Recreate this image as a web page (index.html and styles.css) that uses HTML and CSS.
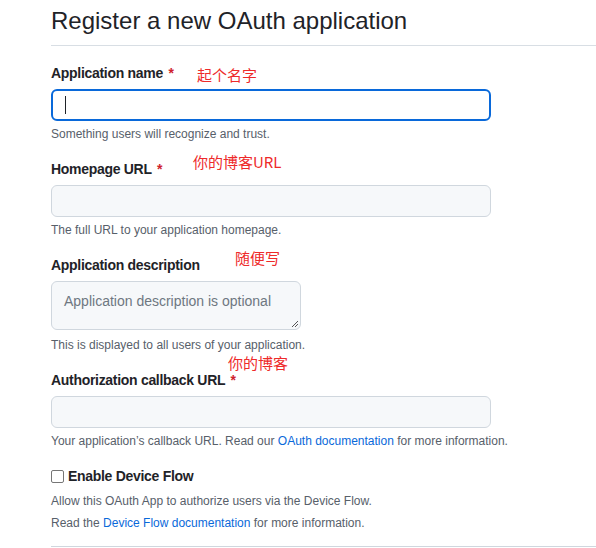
FILE: index.html
```html
<!DOCTYPE html>
<html lang="en">
<head>
<meta charset="utf-8">
<title>Register a new OAuth application</title>
<link rel="stylesheet" href="styles.css">
</head>
<body>
<div class="page">
  <h1 class="title">Register a new OAuth application</h1>
  <form class="form">
    <div class="group">
      <label class="label">Application name <span class="req">*</span></label>
      <span class="note note-1">起个名字</span>
      <div class="input focus"><span class="caret"></span></div>
      <p class="hint">Something users will recognize and trust.</p>
    </div>
    <div class="group">
      <label class="label">Homepage URL <span class="req">*</span></label>
      <span class="note note-2">你的博客URL</span>
      <div class="input"></div>
      <p class="hint">The full URL to your application homepage.</p>
    </div>
    <div class="group">
      <label class="label">Application description</label>
      <span class="note note-3">随便写</span>
      <div class="textarea"><span class="placeholder">Application description is optional</span><svg class="grip" width="10" height="10" viewBox="0 0 10 10"><path d="M9 3 L3 9 M9 6 L6 9" stroke="#555" stroke-width="1"/></svg></div>
      <p class="hint">This is displayed to all users of your application.</p>
    </div>
    <div class="group">
      <label class="label">Authorization callback URL <span class="req">*</span></label>
      <span class="note note-4">你的博客</span>
      <div class="input"></div>
      <p class="hint">Your application’s callback URL. Read our <a class="link">OAuth documentation</a> for more information.</p>
    </div>
    <div class="group">
      <label class="check-row"><span class="checkbox"></span>Enable Device Flow</label>
      <p class="hint tall">Allow this OAuth App to authorize users via the Device Flow.</p>
      <p class="hint tall">Read the <a class="link">Device Flow documentation</a> for more information.</p>
    </div>
  </form>
  <div class="rule"></div>
</div>
</body>
</html>
```

FILE: styles.css
```css
* { box-sizing: border-box; }
html, body { margin: 0; padding: 0; background: #fff; }
body {
  font-family: "Segoe UI", "Liberation Sans", "Noto Sans CJK SC", sans-serif;
  color: #1f2328;
}
.page {
  padding: 6px 0 0 51px;
  overflow: hidden;
  height: 548px;
}
.title {
  margin: 0;
  font-size: 24px;
  font-weight: 400;
  line-height: 30px;
  padding-bottom: 9px;
  border-bottom: 1px solid #d8dee4;
}
.form {
  display: flex;
  flex-direction: column;
  gap: 16px;
  padding-top: 17px;
}
.group {
  position: relative;
  display: flex;
  flex-direction: column;
  align-items: flex-start;
}
.label {
  font-size: 14px;
  font-weight: 600;
  line-height: 20px;
  letter-spacing: -0.3px;
  margin-bottom: 6px;
}
.req { color: #cf222e; margin-left: 2px; }
.note {
  position: absolute;
  font-family: "Noto Sans CJK SC", sans-serif;
  font-size: 15px;
  line-height: 20px;
  color: #ee2a2a;
  white-space: nowrap;
}
.note-1 { left: 146px; top: 2px; }
.note-2 { left: 142px; top: -7px; }
.note-3 { left: 184px; top: -7px; }
.note-4 { left: 177px; top: -17px; }
.input {
  width: 440px;
  height: 32px;
  border: 1px solid #d0d7de;
  border-radius: 6px;
  background: #f6f8fa;
  display: flex;
  align-items: center;
}
.input.focus {
  background: #fff;
  border: 2px solid #0969da;
  padding-left: 12px;
}
.caret {
  width: 1px;
  height: 18px;
  background: #1f2328;
}
.textarea {
  position: relative;
  width: 250px;
  height: 49px;
  border: 1px solid #d0d7de;
  border-radius: 6px;
  background: #f6f8fa;
  padding: 9px 12px;
}
.placeholder {
  font-size: 14px;
  line-height: 20px;
  color: #6e7781;
}
.grip { position: absolute; right: 1px; bottom: 1px; }
.hint {
  margin: 4px 0 0;
  font-size: 12px;
  line-height: 18px;
  color: #57606a;
}
.textarea + .hint { margin-top: 6px; }
.hint.tall { line-height: 22px; margin-top: 4px; }
.hint.tall + .hint.tall { margin-top: 0; }
.link { color: #0969da; text-decoration: none; }
.check-row {
  display: flex;
  align-items: center;
  gap: 4px;
  font-size: 14px;
  font-weight: 600;
  line-height: 20px;
  letter-spacing: -0.3px;
}
.checkbox {
  width: 13px;
  height: 13px;
  border: 1px solid #767676;
  border-radius: 2px;
  background: #fff;
}
.rule {
  margin-top: 12px;
  border-top: 1px solid #d0d7de;
}
```
